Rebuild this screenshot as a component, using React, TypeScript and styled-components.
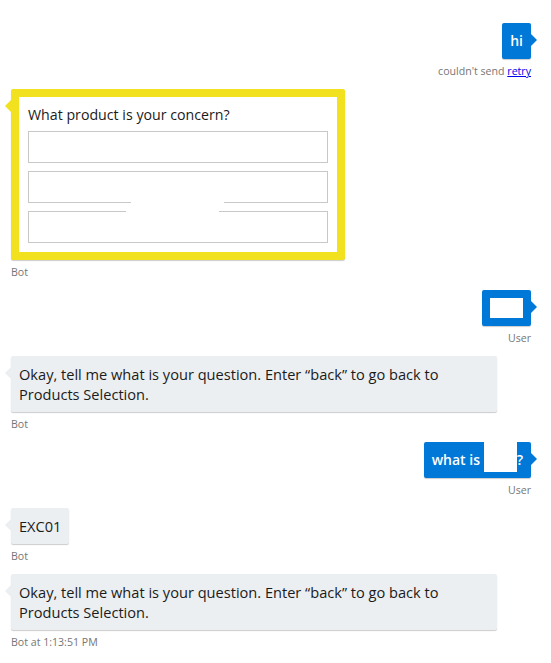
import React from "react";
import styled, { createGlobalStyle } from "styled-components";

const GlobalStyle = createGlobalStyle`
  body {
    margin: 0;
    background: #ffffff;
    font-family: "Open Sans", "Noto Sans", sans-serif;
  }
`;

const BLUE = "#0078d7";
const GRAY = "#eceff1";
const YELLOW = "#f2e11e";

const Chat = styled.div`
  display: flex;
  flex-direction: column;
  padding: 23px 20px 0 11px;
`;

const Row = styled.div<{ $side: "left" | "right" }>`
  display: flex;
  flex-direction: column;
  align-items: ${(p) => (p.$side === "right" ? "flex-end" : "flex-start")};
  margin-bottom: 10px;
`;

const Bubble = styled.div<{ $bg: string; $light?: boolean }>`
  position: relative;
  background: ${(p) => p.$bg};
  color: ${(p) => (p.$light ? "#ffffff" : "#1b1b1b")};
  font-weight: ${(p) => (p.$light ? 600 : 400)};
  font-size: ${(p) => (p.$light ? "14px" : "14.6px")};
  line-height: 20px;
  padding: 8px;
  border-radius: 2px;
  box-shadow: 0 1px 1px 0 rgba(0, 0, 0, 0.2);
  max-width: 470px;
`;

const Callout = styled.svg<{ $side: "left" | "right" }>`
  position: absolute;
  top: 11px;
  ${(p) => (p.$side === "right" ? "right: -6px;" : "left: -6px;")}
  width: 6px;
  height: 12px;
`;

const From = styled.div`
  margin-top: 5px;
  font-size: 10.6px;
  line-height: 15px;
  color: #767676;
`;

const Retry = styled.a`
  color: #0000ee;
  text-decoration: underline;
  cursor: pointer;
`;

const CardFrame = styled.div`
  position: relative;
  background: ${YELLOW};
  padding: 8px;
  border-radius: 2px;
  box-shadow: 0 1px 1px 0 rgba(0, 0, 0, 0.2);
`;

const Card = styled.div`
  position: relative;
  width: 300px;
  background: #ffffff;
  padding: 9px;
  display: flex;
  flex-direction: column;
  gap: 8px;
`;

const CardTitle = styled.div`
  font-size: 14.2px;
  line-height: 18px;
  color: #1b1b1b;
  margin-bottom: -1px;
`;

const Field = styled.div`
  box-sizing: border-box;
  height: 32px;
  border: 1px solid #c8c8c8;
  background: #ffffff;
`;

const Mask = styled.div<{ $top: number; $left: number }>`
  position: absolute;
  top: ${(p) => p.$top}px;
  left: ${(p) => p.$left}px;
  width: 93px;
  height: 1px;
  background: #ffffff;
`;

const Inline = styled.div`
  display: flex;
  align-items: flex-start;
`;

const Blank = styled.span<{ $w: number; $h: number; $lift?: number }>`
  display: block;
  background: #ffffff;
  width: ${(p) => p.$w}px;
  height: ${(p) => p.$h}px;
  margin-top: ${(p) => -(p.$lift ?? 0)}px;
  margin-bottom: ${(p) => 20 - p.$h + (p.$lift ?? 0)}px;
`;

const Arrow = ({ side, color }: { side: "left" | "right"; color: string }) => (
  <Callout $side={side} viewBox="0 0 6 12">
    {side === "right" ? (
      <polygon points="0,0 6,6 0,12" fill={color} />
    ) : (
      <polygon points="6,0 0,6 6,12" fill={color} />
    )}
  </Callout>
);

const App = () => {
  return (
    <>
      <GlobalStyle />
      <Chat>
        <Row $side="right">
          <Bubble $bg={BLUE} $light>
            <Arrow side="right" color={BLUE} />
            hi
          </Bubble>
          <From>
            couldn't send <Retry>retry</Retry>
          </From>
        </Row>

        <Row $side="left">
          <CardFrame>
            <Arrow side="left" color={YELLOW} />
            <Card>
              <CardTitle>What product is your concern?</CardTitle>
              <Field />
              <Field />
              <Field />
              <Mask $top={105} $left={112} />
              <Mask $top={114} $left={107} />
            </Card>
          </CardFrame>
          <From>Bot</From>
        </Row>

        <Row $side="right">
          <Bubble $bg={BLUE} $light>
            <Arrow side="right" color={BLUE} />
            <Blank $w={33} $h={20} />
          </Bubble>
          <From>User</From>
        </Row>

        <Row $side="left">
          <Bubble $bg={GRAY}>
            <Arrow side="left" color={GRAY} />
            Okay, tell me what is your question. Enter “back” to go back to
            Products Selection.
          </Bubble>
          <From>Bot</From>
        </Row>

        <Row $side="right">
          <Bubble $bg={BLUE} $light>
            <Arrow side="right" color={BLUE} />
            <Inline>
              what is&nbsp;
              <Blank $w={33} $h={30} $lift={8} />
              ?
            </Inline>
          </Bubble>
          <From>User</From>
        </Row>

        <Row $side="left">
          <Bubble $bg={GRAY}>
            <Arrow side="left" color={GRAY} />
            EXC01
          </Bubble>
          <From>Bot</From>
        </Row>

        <Row $side="left">
          <Bubble $bg={GRAY}>
            <Arrow side="left" color={GRAY} />
            Okay, tell me what is your question. Enter “back” to go back to
            Products Selection.
          </Bubble>
          <From>Bot at 1:13:51 PM</From>
        </Row>
      </Chat>
    </>
  );
};

export default App;
